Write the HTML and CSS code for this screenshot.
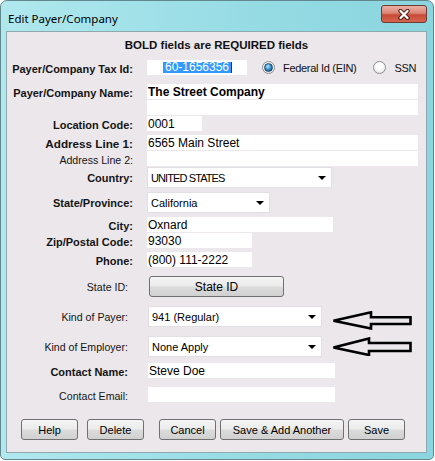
FILE: index.html
```html
<!DOCTYPE html>
<html lang="en">
<head>
    <meta charset="UTF-8">
    <title>Edit Payer/Company</title>
    <link rel="stylesheet" href="styles.css">
</head>
<body>

    <div class="window">
        <div class="title-bar">
            <span class="title">Edit Payer/Company</span>
            <button class="close-btn" aria-label="Close">
                <svg width="14" height="11" viewBox="0 0 14 11">
                    <path d="M3.5 2 L10.5 9 M10.5 2 L3.5 9" stroke="#4a1f18" stroke-width="4.2" stroke-linecap="round"/>
                    <path d="M3.5 2 L10.5 9 M10.5 2 L3.5 9" stroke="#ffffff" stroke-width="2.3" stroke-linecap="round"/>
                </svg>
            </button>
        </div>

        <div class="client">
            <div class="notice">BOLD fields are REQUIRED fields</div>

            <!-- tax id + type -->
            <div class="row">
                <span class="label req">Payer/Company Tax Id:</span>
                <div class="field tax-id"><span class="selected">60-1656356</span></div>
                <div class="radio-group">
                    <span class="radio checked"></span><span class="radio-text">Federal Id (EIN)</span>
                    <span class="radio"></span><span class="radio-text">SSN</span>
                </div>
            </div>

            <div class="row gap">
                <span class="label req">Payer/Company Name:</span>
                <input class="field w-full bold" type="text" value="The Street Company">
            </div>
            <div class="row tight">
                <span class="label"></span>
                <input class="field w-full" type="text" value="">
            </div>
            <div class="row tight">
                <span class="label req">Location Code:</span>
                <input class="field w-code" type="text" value="0001">
            </div>
            <div class="row">
                <span class="label req big">Address Line 1:</span>
                <input class="field w-full" type="text" value="6565 Main Street">
            </div>
            <div class="row tight">
                <span class="label">Address Line 2:</span>
                <input class="field w-full" type="text" value="">
            </div>

            <div class="row tight tall">
                <span class="label req">Country:</span>
                <div class="select w-country"><span class="caps">UNITED STATES</span><span class="caret"></span></div>
            </div>
            <div class="row tall">
                <span class="label req">State/Province:</span>
                <div class="select w-state"><span>California</span><span class="caret"></span></div>
            </div>
            <div class="row">
                <span class="label req">City:</span>
                <input class="field w-city" type="text" value="Oxnard">
            </div>
            <div class="row tight">
                <span class="label req">Zip/Postal Code:</span>
                <input class="field w-zip" type="text" value="93030">
            </div>
            <div class="row">
                <span class="label req">Phone:</span>
                <input class="field w-zip" type="text" value="(800) 111-2222">
            </div>

            <div class="row gap tall">
                <span class="label inset">State ID:</span>
                <button class="btn state-btn">State ID</button>
            </div>
            <div class="row gap tall">
                <span class="label inset">Kind of Payer:</span>
                <div class="select w-kind"><span>941 (Regular)</span><span class="caret"></span></div>
                <svg class="arrow low" width="80" height="19" viewBox="0 0 80 19">
                    <polygon points="1.5,9.7 39,1.3 39,6.3 78.5,6.3 78.5,13 39,13 39,17.5" fill="none" stroke="#000" stroke-width="2.6"/>
                </svg>
            </div>
            <div class="row gap tall">
                <span class="label inset">Kind of Employer:</span>
                <div class="select w-kind"><span>None Apply</span><span class="caret"></span></div>
                <svg class="arrow" width="80" height="19" viewBox="0 0 80 19">
                    <polygon points="1.5,10.5 37,1.5 37,6 78.5,6 78.5,14 37,14 37,18" fill="none" stroke="#000" stroke-width="2.6"/>
                </svg>
            </div>
            <div class="row sep">
                <span class="label req inset">Contact Name:</span>
                <input class="field w-contact" type="text" value="Steve Doe">
            </div>
            <div class="row gap">
                <span class="label inset">Contact Email:</span>
                <input class="field w-contact" type="text" value="">
            </div>

            <div class="actions">
                <div class="btn-group left">
                    <button class="btn">Help</button>
                    <button class="btn">Delete</button>
                </div>
                <div class="btn-group right">
                    <button class="btn">Cancel</button>
                    <button class="btn btn-long">Save &amp; Add Another</button>
                    <button class="btn">Save</button>
                </div>
            </div>
        </div>
    </div>

</body>
</html>
```

FILE: styles.css
```css
* {
    box-sizing: border-box;
}

body {
    margin: 0;
    background-color: #fff;
    font-family: "Liberation Sans", Arial, sans-serif;
}

/* window frame */
.window {
    width: 434px;
    height: 460px;
    padding: 0 6px 6px 5px;
    display: flex;
    flex-direction: column;
    background: linear-gradient(to right, #b0e8ee, #95dbe4 60%, #8ad5df);
    border: 1px solid #62878f;
    border-radius: 7px 7px 5px 5px;
}

.title-bar {
    height: 30px;
    display: flex;
    justify-content: space-between;
    align-items: flex-start;
    padding-left: 2px;
}

.title {
    margin-top: 10px;
    font-family: "Noto Sans", "Open Sans", sans-serif;
    font-size: 11.5px;
    line-height: 15px;
    color: #000;
}

.close-btn {
    margin-top: 4px;
    width: 46px;
    height: 18px;
    padding: 0;
    display: flex;
    align-items: center;
    justify-content: center;
    border: 1px solid #6e3a33;
    border-radius: 3px;
    background: linear-gradient(to bottom, #eab0a4 0%, #dc8576 45%, #c84a36 55%, #d4654f 100%);
}

.client {
    flex: 1;
    padding-top: 3px;
    background-color: #ebe7eb;
    border: 1px solid #8da8af;
}

.notice {
    height: 21px;
    line-height: 21px;
    text-align: center;
    font-size: 11.5px;
    font-weight: bold;
    color: #111;
}

/* form rows */
.row {
    display: flex;
    align-items: center;
    height: 15px;
    margin-top: 4px;
}

.row.tight {
    margin-top: 1px;
}

.row.sep {
    margin-top: 6px;
}

.row.gap {
    margin-top: 9px;
}

.row.tall {
    height: 21px;
}

.label {
    flex: none;
    width: 126px;
    margin-right: 14px;
    padding-top: 2px;
    text-align: right;
    white-space: nowrap;
    font-size: 10.6px;
    color: #151515;
}

.tall .label {
    padding-top: 0;
}

.label.req {
    font-size: 11px;
    font-weight: bold;
}

.label.big {
    font-size: 11.7px;
}

.label.inset {
    padding-right: 5px;
}

.field {
    flex: none;
    height: 15px;
    padding: 0 1px;
    border: none;
    outline: none;
    background-color: #fff;
    font-family: "Liberation Sans", Arial, sans-serif;
    font-size: 12px;
    color: #000;
}

.field.bold {
    font-weight: bold;
}

.tax-id {
    width: 100px;
    display: flex;
    align-items: center;
    justify-content: center;
}

.tax-id .selected {
    padding: 0 2px;
    line-height: 11px;
    white-space: nowrap;
    background-color: #3399ff;
    color: #fff;
    box-shadow: 1px 0 0 #333;
}

.w-full { width: 271px; }
.w-code { width: 55px; }
.w-city { width: 186px; }
.w-zip { width: 105px; }
.w-contact { width: 187px; margin-left: 1px; }

/* radio buttons */
.radio-group {
    flex: none;
    display: flex;
    align-items: center;
    margin-left: 15px;
    white-space: nowrap;
    font-size: 11px;
    color: #111;
}

.radio {
    flex: none;
    width: 13px;
    height: 13px;
    margin-right: 8px;
    display: flex;
    align-items: center;
    justify-content: center;
    border: 1px solid #8e8f8f;
    border-radius: 50%;
    background: radial-gradient(circle at 50% 40%, #ffffff 0 35%, #e6e6e6 75%, #d2d2d2);
}

.radio.checked::after {
    content: "";
    width: 7px;
    height: 7px;
    border-radius: 50%;
    background: radial-gradient(circle at 40% 35%, #bfe8fb 0, #3f94d0 45%, #124f80 85%);
    border: 1px solid #184a6e;
}

.radio-text {
    margin-right: 17px;
    letter-spacing: -0.3px;
}

/* drop downs */
.select {
    flex: none;
    height: 21px;
    display: flex;
    align-items: center;
    justify-content: space-between;
    padding: 0 5px 0 3px;
    background-color: #fff;
    border: 1px solid #e2dfe2;
    font-size: 11px;
    color: #000;
}

.select .caps {
    letter-spacing: -0.9px;
}

.caret {
    width: 0;
    height: 0;
    border-left: 4px solid transparent;
    border-right: 4px solid transparent;
    border-top: 4px solid #000;
}

.w-country { width: 185px; }
.w-state { width: 123px; }
.w-kind { width: 174px; margin-left: 1px; }

.arrow {
    flex: none;
    margin-left: 10px;
}

.arrow.low {
    margin-top: 7px;
}

/* buttons */
.btn {
    flex: none;
    width: 57px;
    height: 21px;
    padding: 0;
    border: 1px solid #707070;
    border-radius: 3px;
    background: linear-gradient(to bottom, #f4f4f4 0%, #ebebeb 48%, #dcdcdc 52%, #d0d0d0 100%);
    font-family: "Liberation Sans", Arial, sans-serif;
    font-size: 11px;
    color: #000;
}

.state-btn {
    width: 135px;
    margin-left: 2px;
    font-size: 12px;
}

.btn-long {
    width: 124px;
}

.actions {
    display: flex;
    margin-top: 17px;
    padding-left: 14px;
}

.btn-group {
    display: flex;
}

.btn-group.left {
    gap: 9px;
}

.btn-group.right {
    gap: 4px;
    margin-left: 15px;
}
```
